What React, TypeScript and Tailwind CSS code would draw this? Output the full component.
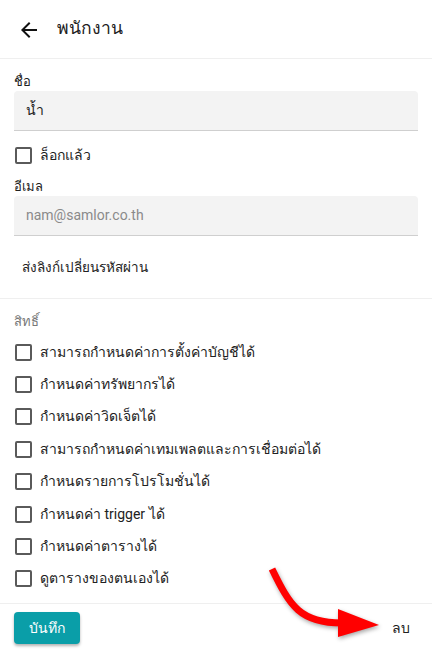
import React from "react";

const permissions = [
  "สามารถกำหนดค่าการตั้งค่าบัญชีได้",
  "กำหนดค่าทรัพยากรได้",
  "กำหนดค่าวิดเจ็ตได้",
  "สามารถกำหนดค่าเทมเพลตและการเชื่อมต่อได้",
  "กำหนดรายการโปรโมชั่นได้",
  "กำหนดค่า trigger ได้",
  "กำหนดค่าตารางได้",
  "ดูตารางของตนเองได้",
];

const Box = () => (
  <span className="w-[17px] h-[17px] border-2 border-[#5a5a5a] rounded-[2px] shrink-0" />
);

const App = () => {
  return (
    <div
      className="relative w-[432px] h-[650px] bg-white text-[#212121] overflow-hidden"
      style={{ fontFamily: "Roboto, 'Noto Sans', sans-serif" }}
    >
      {/* Header */}
      <div className="h-[59px] flex items-center border-b border-[#efefef]">
        <svg width="24" height="24" viewBox="0 0 24 24" className="ml-[17px] mt-[1px]">
          <path
            d="M20 11H7.83l5.59-5.59L12 4l-8 8 8 8 1.41-1.41L7.83 13H20v-2z"
            fill="#111"
          />
        </svg>
        <span className="ml-[16px] text-[17.5px] font-medium leading-none">พนักงาน</span>
      </div>

      {/* Details */}
      <div className="px-[14px] pt-[14px] border-b border-[#efefef] pb-[13px]">
        <div className="text-[13px] leading-[17px] font-medium">ชื่อ</div>
        <div className="h-[40px] mt-[1px] bg-[#f3f3f3] rounded-t-[4px] border-b border-[#cfcfcf] flex items-center px-[12px] text-[14px]">
          น้ำ
        </div>
        <label className="mt-[8px] h-[32px] flex items-center gap-[8px] pl-[1px] text-[14px]">
          <Box />
          <span>ล็อกแล้ว</span>
        </label>
        <div className="mt-[7px] text-[13px] leading-[17px] font-medium">อีเมล</div>
        <div className="h-[40px] mt-[1px] bg-[#f3f3f3] rounded-t-[4px] border-b border-[#cfcfcf] flex items-center px-[12px] text-[14px] text-[#8a8a8a]">
          nam@samlor.co.th
        </div>
        <button className="mt-[13px] h-[36px] px-[8px] text-[13.5px] font-medium">
          ส่งลิงก์เปลี่ยนรหัสผ่าน
        </button>
      </div>

      {/* Permissions */}
      <div className="px-[14px] pt-[14px] pb-[8px] border-b border-[#efefef]">
        <div className="text-[13px] leading-[18px] text-[#777]">สิทธิ์</div>
        <div className="mt-[5px] flex flex-col">
          {permissions.map((p) => (
            <label key={p} className="h-[32.4px] flex items-center gap-[8px] pl-[1px] text-[14px]">
              <Box />
              <span>{p}</span>
            </label>
          ))}
        </div>
      </div>

      {/* Footer */}
      <div className="px-[14px] pt-[8px] flex items-center justify-between">
        <button className="h-[32px] w-[66px] rounded-[4px] bg-[#0a9ea8] text-white text-[14px] font-medium shadow-[0_2px_3px_rgba(0,0,0,0.3)]">
          บันทึก
        </button>
        <button className="h-[32px] px-[8px] text-[14px] font-medium">ลบ</button>
      </div>

      {/* Annotation arrow */}
      <svg
        className="absolute left-0 top-0 pointer-events-none"
        width="432"
        height="650"
        style={{ filter: "drop-shadow(1px 2px 2px rgba(0,0,0,0.35))" }}
      >
        <path
          d="M272 569 C 290 606, 300 623, 342 623"
          stroke="#ff0000"
          strokeWidth="7"
          fill="none"
        />
        <polygon points="338,609 338,637 379,625" fill="#ff0000" />
      </svg>
    </div>
  );
};

export default App;
